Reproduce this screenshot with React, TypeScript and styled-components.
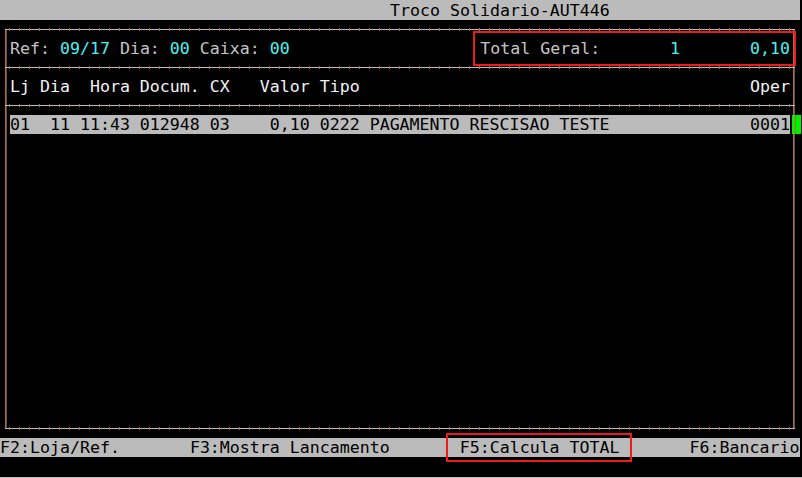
import React from 'react';
import styled, { createGlobalStyle } from 'styled-components';

const Global = createGlobalStyle`
  html, body { margin: 0; padding: 0; background: #000; }
  body { width: 802px; height: 478px; overflow: hidden; }
`;

const TERM_GRAY = '#bbbbbb';
const BORDER_ORANGE = '#b8683a';
const LINE_GRAY = '#bdbdbd';
const CYAN = '#4cf0f0';
const ANNOT_RED = '#ec1c1c';

const Screen = styled.div`
  position: relative;
  width: 802px;
  height: 478px;
  background: #000;
  font-family: "DejaVu Sans Mono", "Liberation Mono", monospace;
  font-size: 16.6px;
  white-space: pre;
  display: flex;
  flex-direction: column;
`;

const TitleBar = styled.div`
  width: 800px;
  height: 20px;
  box-sizing: border-box;
  padding: 1px 0 0 390px;
  line-height: 20px;
  background: ${TERM_GRAY};
  color: #000;
`;

const Frame = styled.div`
  position: relative;
  width: 800px;
  height: 418px;
  display: flex;
  flex-direction: column;

  &::before {
    content: '';
    position: absolute;
    top: 9px;
    bottom: 9px;
    left: 5px;
    right: 6px;
    border-left: 1px solid ${BORDER_ORANGE};
    border-right: 1px solid ${BORDER_ORANGE};
    box-shadow: 1px 0 0 rgba(190, 190, 190, 0.45), inset 1px 0 0 rgba(190, 190, 190, 0.45);
    pointer-events: none;
  }
`;

const HLine = styled.div`
  position: relative;
  height: 19px;
  flex: none;

  &::after {
    content: '';
    position: absolute;
    left: 5px;
    right: 5px;
    top: 8px;
    height: 3px;
    background:
      repeating-linear-gradient(90deg, transparent 0 4px, ${BORDER_ORANGE} 4px 5px, transparent 5px 10px),
      linear-gradient(180deg, transparent 0 1px, ${LINE_GRAY} 1px 2px, transparent 2px 3px);
  }
`;

const TextRow = styled.div<{ $bright?: boolean }>`
  height: 19px;
  flex: none;
  line-height: 20px;
  padding: 0 10px;
  display: flex;
  justify-content: space-between;
  color: ${(p) => (p.$bright ? '#f2f2f2' : '#c4c4c4')};
`;

const Value = styled.span`
  color: ${CYAN};
`;

const Annotated = styled.span<{ $t: number; $r: number; $b: number; $l: number }>`
  position: relative;

  &::after {
    content: '';
    position: absolute;
    top: ${(p) => -p.$t}px;
    right: ${(p) => -p.$r}px;
    bottom: ${(p) => -p.$b}px;
    left: ${(p) => -p.$l}px;
    border: 2px solid ${ANNOT_RED};
    pointer-events: none;
  }
`;

const SelectedRow = styled.div`
  position: relative;
  height: 19px;
  flex: none;
  margin: 0 10px;
  line-height: 20px;
  background: ${TERM_GRAY};
  color: #000;
  display: flex;
  justify-content: space-between;

  &::after {
    content: '';
    position: absolute;
    top: 0;
    bottom: 0;
    left: calc(100% + 2px);
    width: 9px;
    background: linear-gradient(90deg, #00f000 0 3px, ${BORDER_ORANGE} 3px 4px, #00f000 4px 9px);
  }
`;

const Filler = styled.div`
  flex: 1;
`;

const FunctionBar = styled.div`
  width: 800px;
  height: 19px;
  flex: none;
  line-height: 19px;
  background: ${TERM_GRAY};
  color: #000;
  display: flex;
  gap: 70px;
`;

const BottomEdge = styled.div`
  margin-top: auto;
  height: 1px;
  background: ${LINE_GRAY};
`;

export default function App() {
  return (
    <>
      <Global />
      <Screen>
        <TitleBar>Troco Solidario-AUT446</TitleBar>
        <Frame>
          <HLine />
          <TextRow>
            <span>
              Ref: <Value>09/17</Value> Dia: <Value>00</Value> Caixa: <Value>00</Value>
            </span>
            <Annotated $t={8} $r={6} $b={8} $l={7}>
              {'Total Geral:       '}
              <Value>1</Value>
              {'       '}
              <Value>0,10</Value>
            </Annotated>
          </TextRow>
          <HLine />
          <TextRow $bright>
            <span>Lj Dia  Hora Docum. CX   Valor Tipo</span>
            <span>Oper</span>
          </TextRow>
          <HLine />
          <SelectedRow>
            <span>01  11 11:43 012948 03    0,10 0222 PAGAMENTO RESCISAO TESTE</span>
            <span>0001</span>
          </SelectedRow>
          <Filler />
          <HLine />
        </Frame>
        <FunctionBar>
          <span>F2:Loja/Ref.</span>
          <span>F3:Mostra Lancamento</span>
          <Annotated $t={5} $r={12} $b={5} $l={14}>F5:Calcula TOTAL</Annotated>
          <span>F6:Bancario</span>
        </FunctionBar>
        <BottomEdge />
      </Screen>
    </>
  );
}
